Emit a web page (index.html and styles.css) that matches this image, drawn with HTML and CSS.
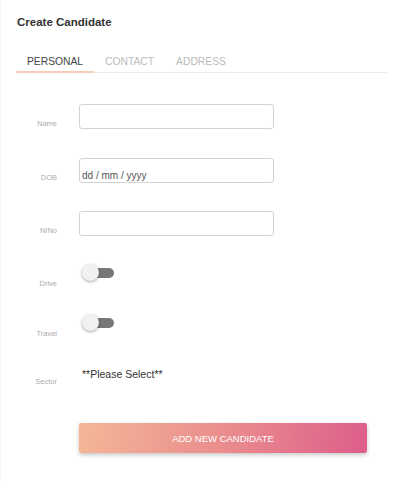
FILE: index.html
```html
<!DOCTYPE html>
<html>
<head>
<meta charset="utf-8">
<link rel="stylesheet" href="styles.css">
</head>
<body>
<div class="card">
  <h1 class="title">Create Candidate</h1>
  <div class="tabs">
    <div class="tab active">PERSONAL</div>
    <div class="tab">CONTACT</div>
    <div class="tab">ADDRESS</div>
  </div>
  <form class="form">
    <div class="row row-input">
      <label class="label">Name</label>
      <div class="field"></div>
    </div>
    <div class="row row-input">
      <label class="label">DOB</label>
      <div class="field date">dd / mm / yyyy</div>
    </div>
    <div class="row row-input">
      <label class="label">NINo</label>
      <div class="field"></div>
    </div>
    <div class="row row-toggle">
      <label class="label">Drive</label>
      <div class="toggle"><span class="track"></span><span class="knob"></span></div>
    </div>
    <div class="row row-toggle">
      <label class="label">Travel</label>
      <div class="toggle"><span class="track"></span><span class="knob"></span></div>
    </div>
    <div class="row row-select">
      <label class="label">Sector</label>
      <div class="select">**Please Select**</div>
    </div>
    <div class="actions">
      <button type="button" class="btn">ADD NEW CANDIDATE</button>
    </div>
  </form>
</div>
</body>
</html>
```

FILE: styles.css
```css
* { box-sizing: border-box; }
html, body {
  margin: 0;
  padding: 0;
  background: #fff;
  font-family: "Liberation Sans", Arial, sans-serif;
}
.card {
  width: 402px;
  min-height: 481px;
  padding: 15px 16px 0 15px;
  border-left: 1px solid #f4f4f4;
  background: #fff;
}
.title {
  margin: 0 0 0 1px;
  font-size: 11.5px;
  font-weight: bold;
  color: #333;
  line-height: 14px;
}
.tabs {
  display: flex;
  margin-top: 18px;
  border-bottom: 1px solid #ececec;
  width: 371px;
}
.tab {
  padding: 9px 11px 3px;
  font-size: 10.3px;
  line-height: 12px;
  color: #bbb;
  border-bottom: 2px solid transparent;
  margin-bottom: -1px;
}
.tab.active {
  color: #444;
  border-bottom-color: #f7cdb6;
}
.form {
  padding-top: 31px;
  display: flex;
  flex-direction: column;
}
.row {
  display: flex;
  align-items: flex-start;
  column-gap: 22px;
}
.row-input { height: 53px; }
.row-input:first-child { height: 54px; }
.row-toggle { height: 50px; }
.row-select { height: 59px; }
.label {
  width: 41px;
  flex: none;
  text-align: right;
  font-size: 7.5px;
  line-height: 10px;
  color: #b0aaaa;
  padding-top: 15px;
}
.row-select .label { padding-top: 13px; }
.field {
  width: 195px;
  height: 25px;
  border: 1px solid #d2d2d2;
  border-radius: 3px;
  background: #fff;
}
.field.date {
  font-size: 10px;
  line-height: 12px;
  color: #555;
  padding: 11px 0 0 2px;
}
.toggle {
  position: relative;
  width: 38px;
  height: 17px;
}
.track {
  position: absolute;
  left: 7px;
  top: 4px;
  width: 28px;
  height: 10px;
  border-radius: 5px;
  background: #777;
}
.knob {
  position: absolute;
  left: 3px;
  top: 0;
  width: 17px;
  height: 17px;
  border-radius: 50%;
  background: #f1f1f1;
  box-shadow: 0 1px 3px rgba(0,0,0,0.35);
}
.select {
  font-size: 10.5px;
  line-height: 13px;
  color: #333;
  padding: 4px 0 0 3px;
}
.actions {
  padding-left: 63px;
}
.btn {
  width: 288px;
  height: 30px;
  border: none;
  border-radius: 2px;
  background: linear-gradient(100deg, #f5b797 0%, #ea8d8e 50%, #dd5e8a 100%);
  color: #fff;
  font-family: "Liberation Sans", Arial, sans-serif;
  font-size: 9.5px;
  box-shadow: 0 2px 4px rgba(0,0,0,0.22);
  padding: 0;
  cursor: pointer;
}
```
